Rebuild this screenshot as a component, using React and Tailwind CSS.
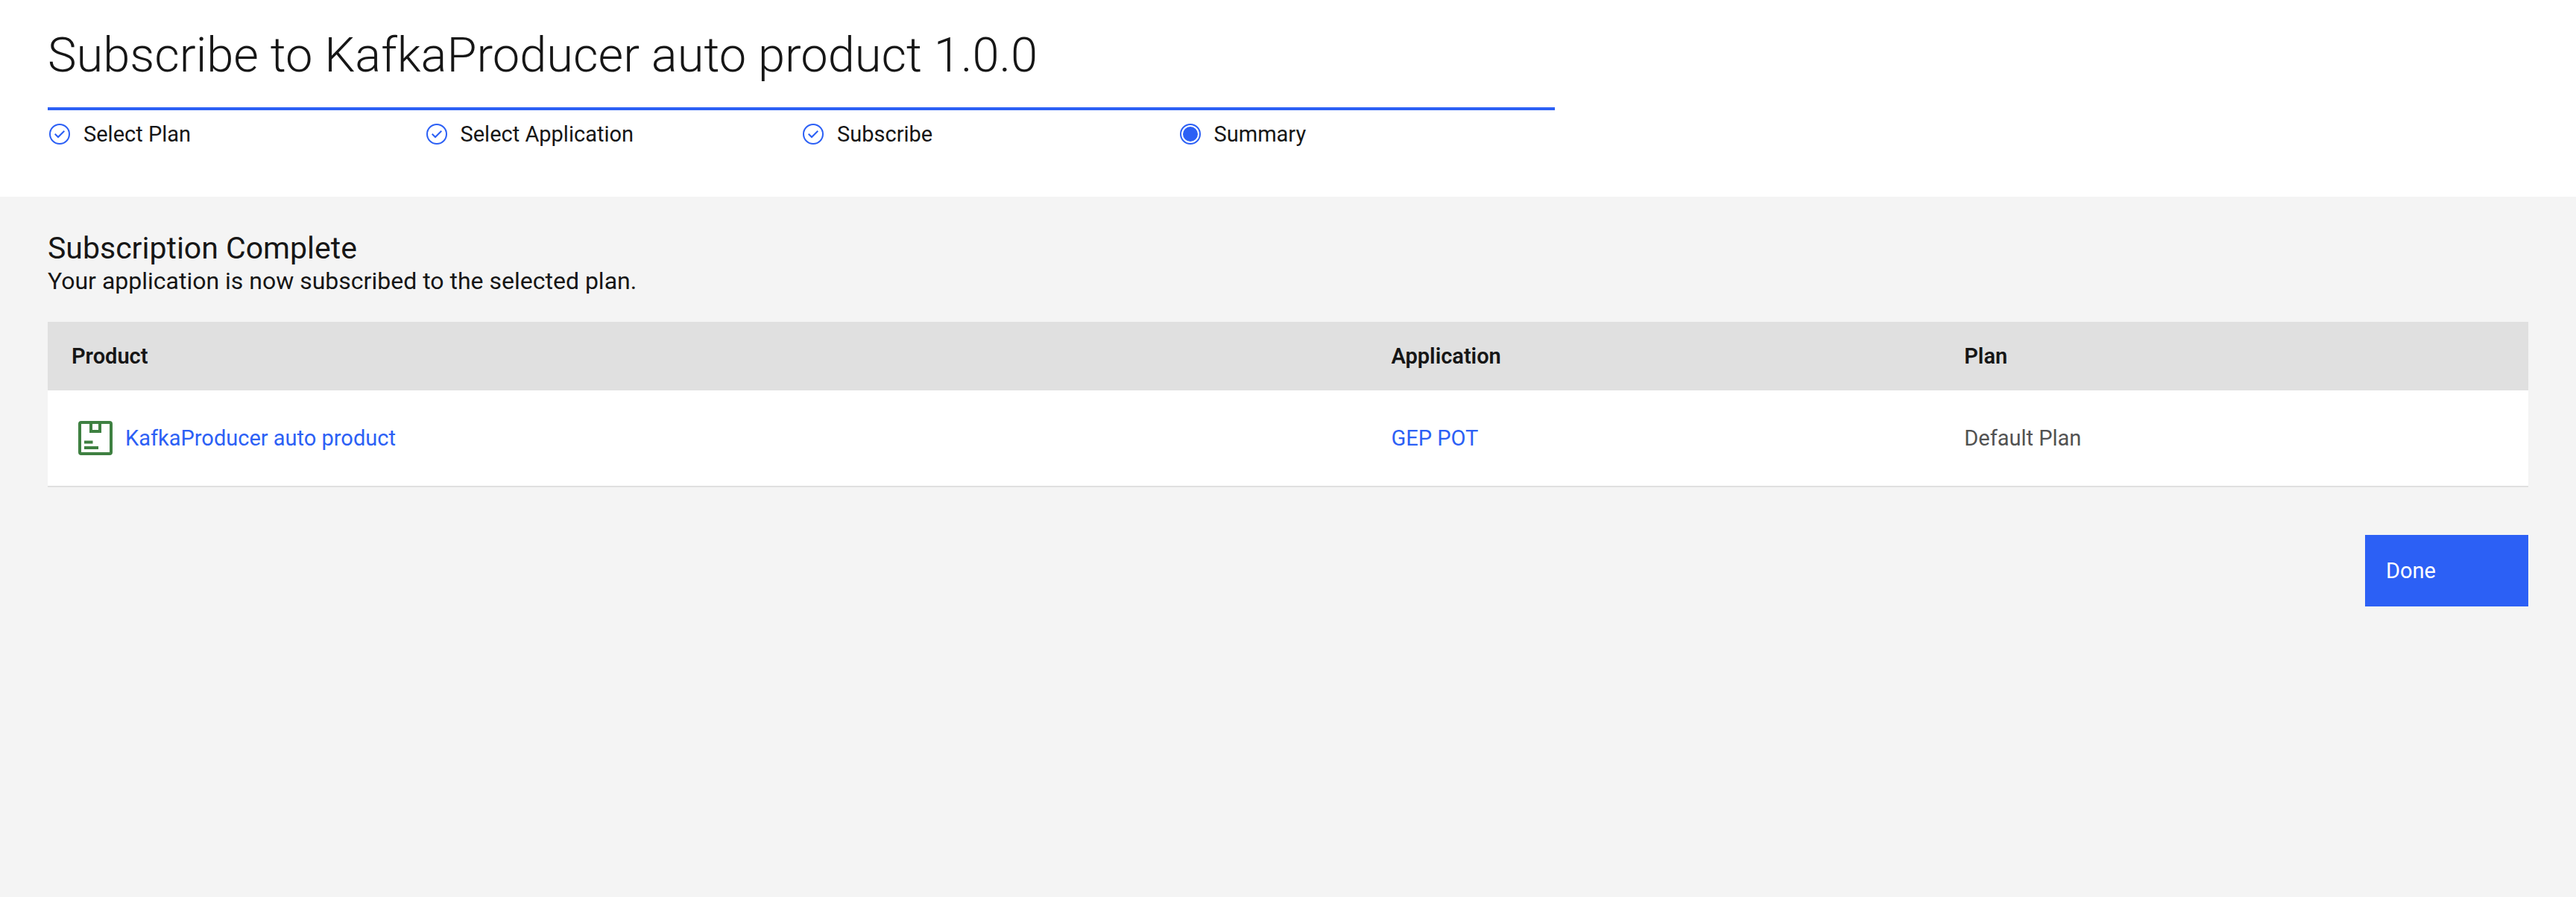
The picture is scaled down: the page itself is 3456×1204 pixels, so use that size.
import React from "react";

const STEPS = [
  { label: "Select Plan", done: true },
  { label: "Select Application", done: true },
  { label: "Subscribe", done: true },
  { label: "Summary", done: false },
];

const ROWS = [
  { product: "KafkaProducer auto product", application: "GEP POT", plan: "Default Plan" },
];

function StepIcon({ done }) {
  return (
    <svg viewBox="0 0 32 32" className="size-8 shrink-0 text-[#2c60f5]" aria-hidden="true">
      <circle cx="16" cy="16" r="13" fill="none" stroke="currentColor" strokeWidth="2" />
      {done ? (
        <path fill="currentColor" d="M14 21.414l-5-5L10.413 15 14 18.586 21.585 11 23 12.415z" />
      ) : (
        <circle cx="16" cy="16" r="10" fill="currentColor" />
      )}
    </svg>
  );
}

function ProductIcon() {
  return (
    <svg
      viewBox="0 0 48 48"
      className="ml-2 size-12 shrink-0 text-[#3e8041]"
      fill="none"
      stroke="currentColor"
      strokeWidth="4"
      aria-hidden="true"
    >
      <rect x="3" y="3" width="42" height="42" rx="2" />
      <path d="M18 4v11h12V4M9 29.5h11.5M9 37h19" />
    </svg>
  );
}

function StepList() {
  return (
    <ol className="mt-7 grid w-full max-w-[2022px] grid-cols-4 border-t-4 border-[#2c60f5] pt-3">
      {STEPS.map((step) => (
        <li
          key={step.label}
          className="flex items-center gap-4 text-[29px] leading-10"
          aria-current={step.done ? undefined : "step"}
        >
          <StepIcon done={step.done} />
          {step.label}
        </li>
      ))}
    </ol>
  );
}

function SummaryTable() {
  return (
    <table className="mt-9 w-full table-fixed border-separate border-spacing-0 text-left text-[29px] leading-10">
      <thead className="bg-[#e0e0e0]">
        <tr className="h-[92px]">
          <th scope="col" className="w-[53.2%] px-8 font-semibold">Product</th>
          <th scope="col" className="w-[23.1%] px-8 font-semibold">Application</th>
          <th scope="col" className="px-8 font-semibold">Plan</th>
        </tr>
      </thead>
      <tbody className="bg-white text-[#525252]">
        {ROWS.map((row) => (
          <tr key={row.product} className="h-[130px]">
            <td className="border-b-2 border-[#e0e0e0] px-8">
              <div className="flex items-center gap-4">
                <ProductIcon />
                <a href="#product" className="text-[#2c60f5]">{row.product}</a>
              </div>
            </td>
            <td className="border-b-2 border-[#e0e0e0] px-8">
              <a href="#application" className="text-[#2c60f5]">{row.application}</a>
            </td>
            <td className="border-b-2 border-[#e0e0e0] px-8">{row.plan}</td>
          </tr>
        ))}
      </tbody>
    </table>
  );
}

export default function App() {
  return (
    <div className="flex min-h-screen flex-col bg-white font-['Roboto',sans-serif] text-[#161616]">
      <header className="px-16 pt-8 pb-16">
        <h1 className="text-[65px] leading-[84px] font-light">
          Subscribe to KafkaProducer auto product 1.0.0
        </h1>
        <StepList />
      </header>
      <main className="flex-1 bg-[#f4f4f4] px-16 pt-11 pb-16">
        <h2 className="text-[41px] leading-[50px]">Subscription Complete</h2>
        <p className="text-[32px] leading-[38px]">
          Your application is now subscribed to the selected plan.
        </p>
        <SummaryTable />
        <div className="mt-16 flex justify-end">
          <button
            type="button"
            className="w-[219px] bg-[#2c60f5] px-7 py-7 text-left text-[29px] leading-10 text-white"
          >
            Done
          </button>
        </div>
      </main>
    </div>
  );
}
